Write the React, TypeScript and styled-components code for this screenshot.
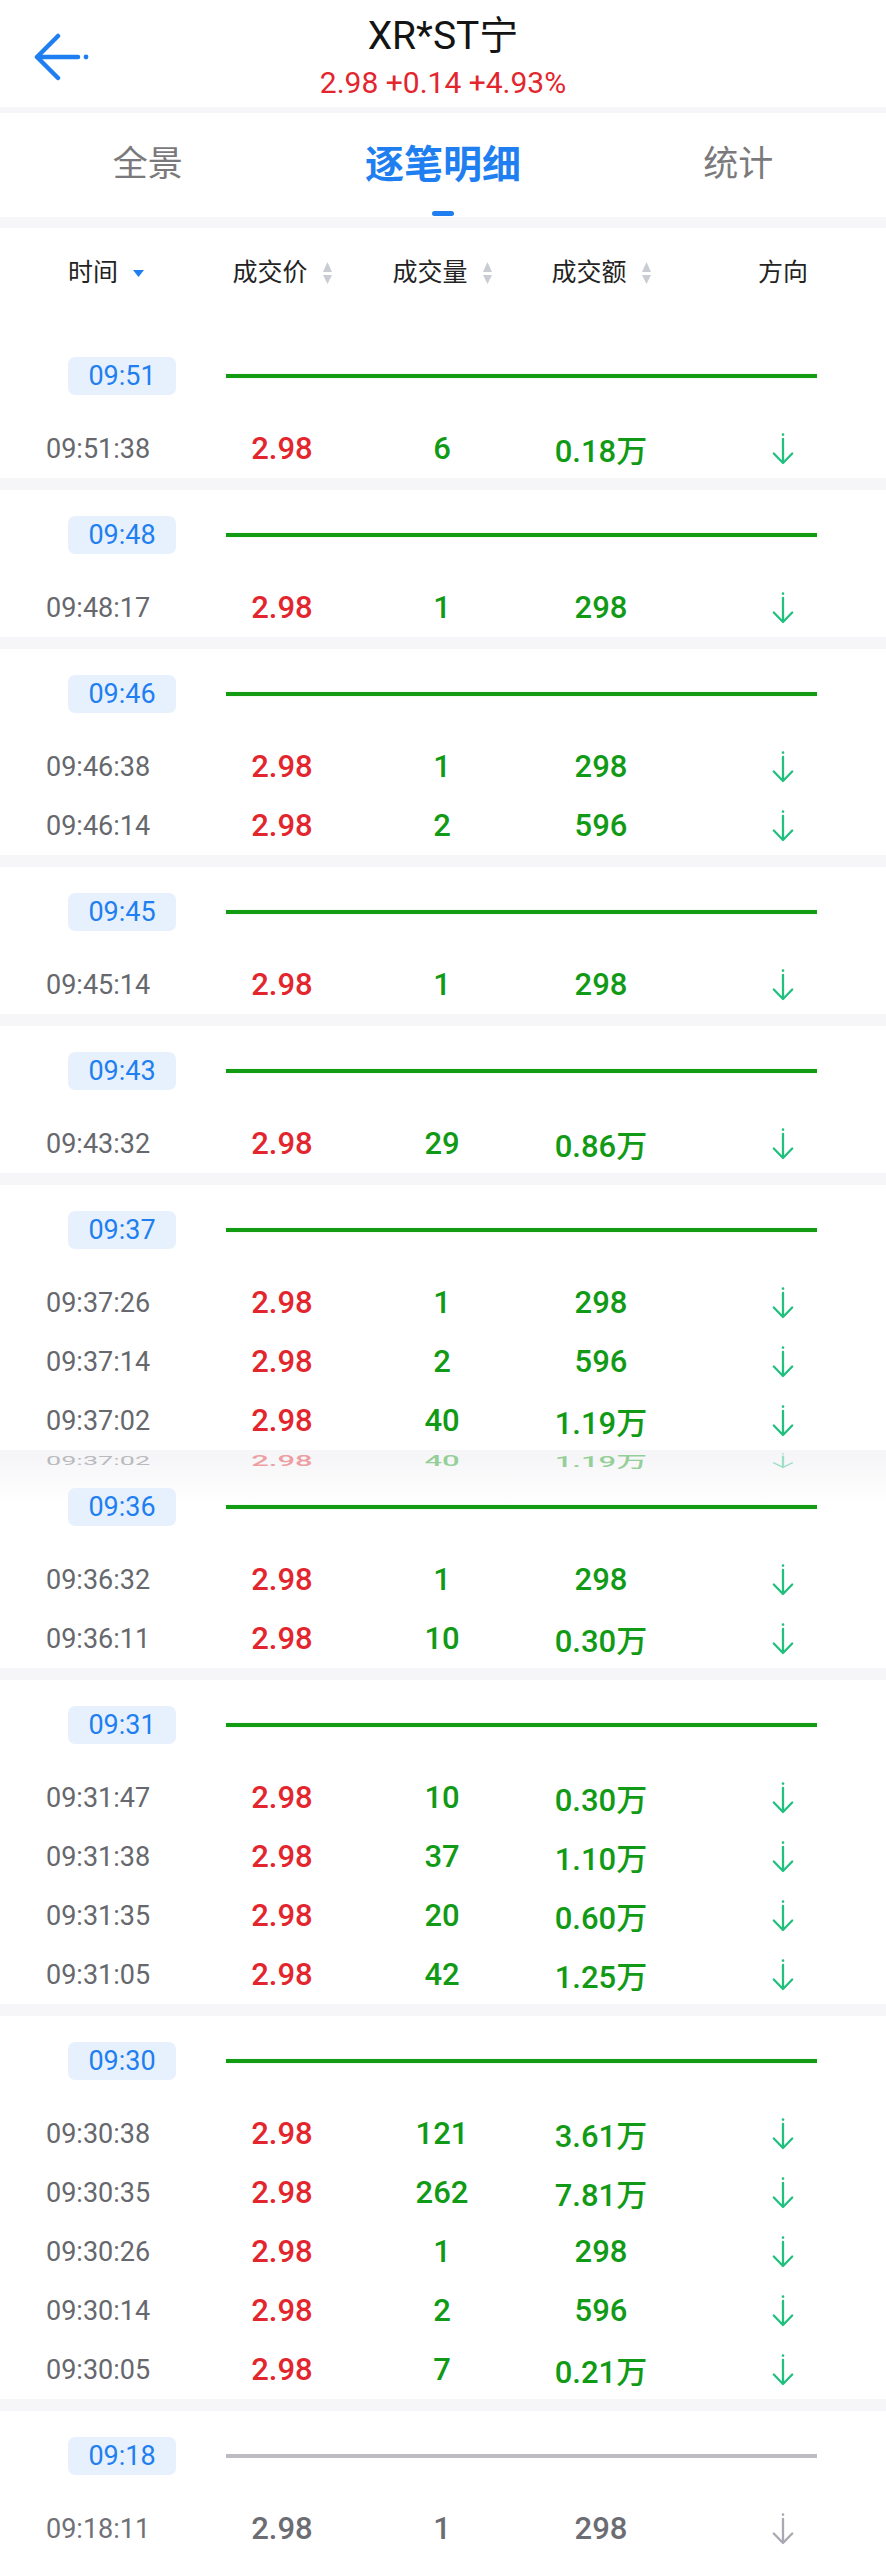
import * as React from 'react'
import styled, { createGlobalStyle, css } from 'styled-components'

const GlobalStyle = createGlobalStyle`
  html, body {
    margin: 0;
    padding: 0;
    background: #ffffff;
  }
  body {
    font-family: Roboto, "Noto Sans CJK SC", sans-serif;
    color: #222;
  }
`

const RED = '#e3262e'
const GREEN = '#119a15'
const BLUE = '#1f7ff0'
const TEAL = '#22c07f'
const GAP_BG = '#f6f6f8'

const COLS = '156px 160px 160px 158px 206px'

const Page = styled.div`
  width: 886px;
  background: #fff;
`

const Header = styled.div`
  display: grid;
  grid-template-columns: 1fr auto 1fr;
  height: 107px;
`

const BackButton = styled.div`
  display: flex;
  align-items: flex-start;
  padding: 33px 0 0 34px;
`

const TitleBlock = styled.div`
  display: flex;
  flex-direction: column;
  align-items: center;
  padding-top: 14px;
`

const Title = styled.div`
  font-size: 39px;
  line-height: 44px;
  color: #141414;
`

const Quote = styled.div`
  margin-top: 8px;
  font-size: 30px;
  line-height: 34px;
  color: ${RED};
`

const Stripe = styled.div<{ $h: number }>`
  height: ${(p) => p.$h}px;
  background: ${GAP_BG};
`

const TabBar = styled.div`
  display: grid;
  grid-template-columns: repeat(3, 1fr);
  height: 104px;
`

const Tab = styled.div<{ $active?: boolean }>`
  display: flex;
  flex-direction: column;
  align-items: center;
  padding-top: 32px;
  font-size: ${(p) => (p.$active ? 39 : 35)}px;
  line-height: 40px;
  font-weight: ${(p) => (p.$active ? 700 : 400)};
  color: ${(p) => (p.$active ? BLUE : '#7a7a7c')};
`

const Indicator = styled.div`
  margin-top: 26px;
  width: 22px;
  height: 5px;
  border-radius: 3px;
  background: ${BLUE};
`

const ColumnHead = styled.div`
  display: grid;
  grid-template-columns: ${COLS};
  padding-left: 46px;
  height: 103px;
  align-items: start;
  padding-top: 30px;
  box-sizing: border-box;
`

const HeadCell = styled.div<{ $start?: boolean }>`
  display: flex;
  align-items: center;
  justify-content: ${(p) => (p.$start ? 'flex-start' : 'center')};
  padding-left: ${(p) => (p.$start ? 22 : 0)}px;
  gap: 15px;
  font-size: 25px;
  line-height: 30px;
  color: #232323;
`

const SortIcon = styled.svg`
  display: block;
  flex-shrink: 0;
`

const Card = styled.div<{ $fade?: boolean }>`
  position: relative;
  padding-top: 26px;
  background: ${(p) => (p.$fade ? `linear-gradient(to bottom, #f7f7f9 0, #ffffff 44px)` : '#fff')};
`

const CardHead = styled.div`
  display: flex;
  align-items: center;
  height: 38px;
  padding: 0 69px 0 68px;
  margin-bottom: 24px;
`

const Badge = styled.div`
  width: 108px;
  height: 38px;
  border-radius: 7px;
  background: #e7f1fe;
  color: ${BLUE};
  font-size: 27px;
  line-height: 38px;
  text-align: center;
`

const Rule = styled.div<{ $neutral?: boolean }>`
  flex: 1;
  margin-left: 50px;
  height: 4px;
  background: ${(p) => (p.$neutral ? '#bcbcc3' : '#149b14')};
  box-shadow: ${(p) => (p.$neutral ? 'none' : '0 0 1px rgba(60, 200, 60, 0.6)')};
`

const Row = styled.div`
  display: grid;
  grid-template-columns: ${COLS};
  padding-left: 46px;
  height: 59px;
  align-items: center;
`

const GhostRow = styled(Row)`
  position: absolute;
  left: 0;
  right: 0;
  bottom: -40px;
  opacity: 0.42;
  transform: scaleY(0.48);
  pointer-events: none;
  z-index: 2;
`

const Time = styled.div<{ $neutral?: boolean }>`
  font-size: 27px;
  color: ${(p) => (p.$neutral ? '#707077' : '#66686d')};
`

const Num = styled.div<{ $tone: 'red' | 'green' | 'gray' }>`
  text-align: center;
  font-size: 31px;
  font-weight: 500;
  ${(p) =>
    p.$tone === 'red'
      ? css`color: ${RED};`
      : p.$tone === 'green'
      ? css`color: ${GREEN};`
      : css`color: #6c6c73;`}
`

const Dir = styled.div`
  display: flex;
  justify-content: center;
`

const Gap = styled.div`
  height: 12px;
  background: ${GAP_BG};
`

const BackArrow = () => (
  <svg width="58" height="50" viewBox="0 0 58 50">
    <path
      d="M24 3 L3 24 L24 45 M3 24 L44 24"
      fill="none"
      stroke={BLUE}
      strokeWidth="4.5"
      strokeLinecap="round"
      strokeLinejoin="round"
    />
    <circle cx="52" cy="24" r="2.4" fill={BLUE} />
  </svg>
)

const SortBoth = () => (
  <SortIcon width="9" height="22" viewBox="0 0 9 22">
    <path d="M4.5 0 L9 10 L0 10 Z" fill="#c9ccd3" />
    <path d="M0 13 L9 13 L4.5 22 Z" fill="#c9ccd3" />
  </SortIcon>
)

const SortDown = () => (
  <SortIcon width="11" height="7" viewBox="0 0 11 7">
    <path d="M0 0 L11 0 L5.5 7 Z" fill={BLUE} />
  </SortIcon>
)

const DownArrow = ({ color }: { color: string }) => (
  <svg width="22" height="32" viewBox="0 0 22 32">
    <circle cx="11" cy="1.6" r="1.3" fill={color} />
    <path
      d="M11 6 L11 30 M1.8 20.5 L11 30 L20.2 20.5"
      fill="none"
      stroke={color}
      strokeWidth="2.3"
      strokeLinecap="round"
      strokeLinejoin="round"
    />
  </svg>
)

type Trade = [string, string, string]

interface Group {
  minute: string
  rows: Trade[]
  neutral?: boolean
  ghost?: boolean
  fade?: boolean
}

const groups: Group[] = [
  { minute: '09:51', rows: [['09:51:38', '6', '0.18万']] },
  { minute: '09:48', rows: [['09:48:17', '1', '298']] },
  { minute: '09:46', rows: [['09:46:38', '1', '298'], ['09:46:14', '2', '596']] },
  { minute: '09:45', rows: [['09:45:14', '1', '298']] },
  { minute: '09:43', rows: [['09:43:32', '29', '0.86万']] },
  {
    minute: '09:37',
    rows: [['09:37:26', '1', '298'], ['09:37:14', '2', '596'], ['09:37:02', '40', '1.19万']],
    ghost: true,
  },
  { minute: '09:36', rows: [['09:36:32', '1', '298'], ['09:36:11', '10', '0.30万']], fade: true },
  {
    minute: '09:31',
    rows: [
      ['09:31:47', '10', '0.30万'],
      ['09:31:38', '37', '1.10万'],
      ['09:31:35', '20', '0.60万'],
      ['09:31:05', '42', '1.25万'],
    ],
  },
  {
    minute: '09:30',
    rows: [
      ['09:30:38', '121', '3.61万'],
      ['09:30:35', '262', '7.81万'],
      ['09:30:26', '1', '298'],
      ['09:30:14', '2', '596'],
      ['09:30:05', '7', '0.21万'],
    ],
  },
  { minute: '09:18', rows: [['09:18:11', '1', '298']], neutral: true },
]

const TradeCells = ({ t, neutral }: { t: Trade; neutral?: boolean }) => (
  <>
    <Time $neutral={neutral}>{t[0]}</Time>
    <Num $tone={neutral ? 'gray' : 'red'}>2.98</Num>
    <Num $tone={neutral ? 'gray' : 'green'}>{t[1]}</Num>
    <Num $tone={neutral ? 'gray' : 'green'}>{t[2]}</Num>
    <Dir>
      <DownArrow color={neutral ? '#a8a9b2' : TEAL} />
    </Dir>
  </>
)

const App: React.FC = () => {
  return (
    <Page>
      <GlobalStyle />
      <Header>
        <BackButton>
          <BackArrow />
        </BackButton>
        <TitleBlock>
          <Title>XR*ST宁</Title>
          <Quote>2.98 +0.14 +4.93%</Quote>
        </TitleBlock>
        <div />
      </Header>
      <Stripe $h={6} />
      <TabBar>
        <Tab>全景</Tab>
        <Tab $active>
          逐笔明细
          <Indicator />
        </Tab>
        <Tab>统计</Tab>
      </TabBar>
      <Stripe $h={11} />
      <ColumnHead>
        <HeadCell $start>
          时间
          <SortDown />
        </HeadCell>
        <HeadCell>
          成交价
          <SortBoth />
        </HeadCell>
        <HeadCell>
          成交量
          <SortBoth />
        </HeadCell>
        <HeadCell>
          成交额
          <SortBoth />
        </HeadCell>
        <HeadCell>方向</HeadCell>
      </ColumnHead>
      {groups.map((g, i) => {
        const last = g.rows[g.rows.length - 1]
        return (
          <React.Fragment key={g.minute}>
            {i > 0 && <Gap />}
            <Card $fade={g.fade}>
              <CardHead>
                <Badge>{g.minute}</Badge>
                <Rule $neutral={g.neutral} />
              </CardHead>
              {g.rows.map((t) => (
                <Row key={t[0]}>
                  <TradeCells t={t} neutral={g.neutral} />
                </Row>
              ))}
              {g.ghost && (
                <GhostRow>
                  <TradeCells t={last} />
                </GhostRow>
              )}
            </Card>
          </React.Fragment>
        )
      })}
    </Page>
  )
}

export default App
